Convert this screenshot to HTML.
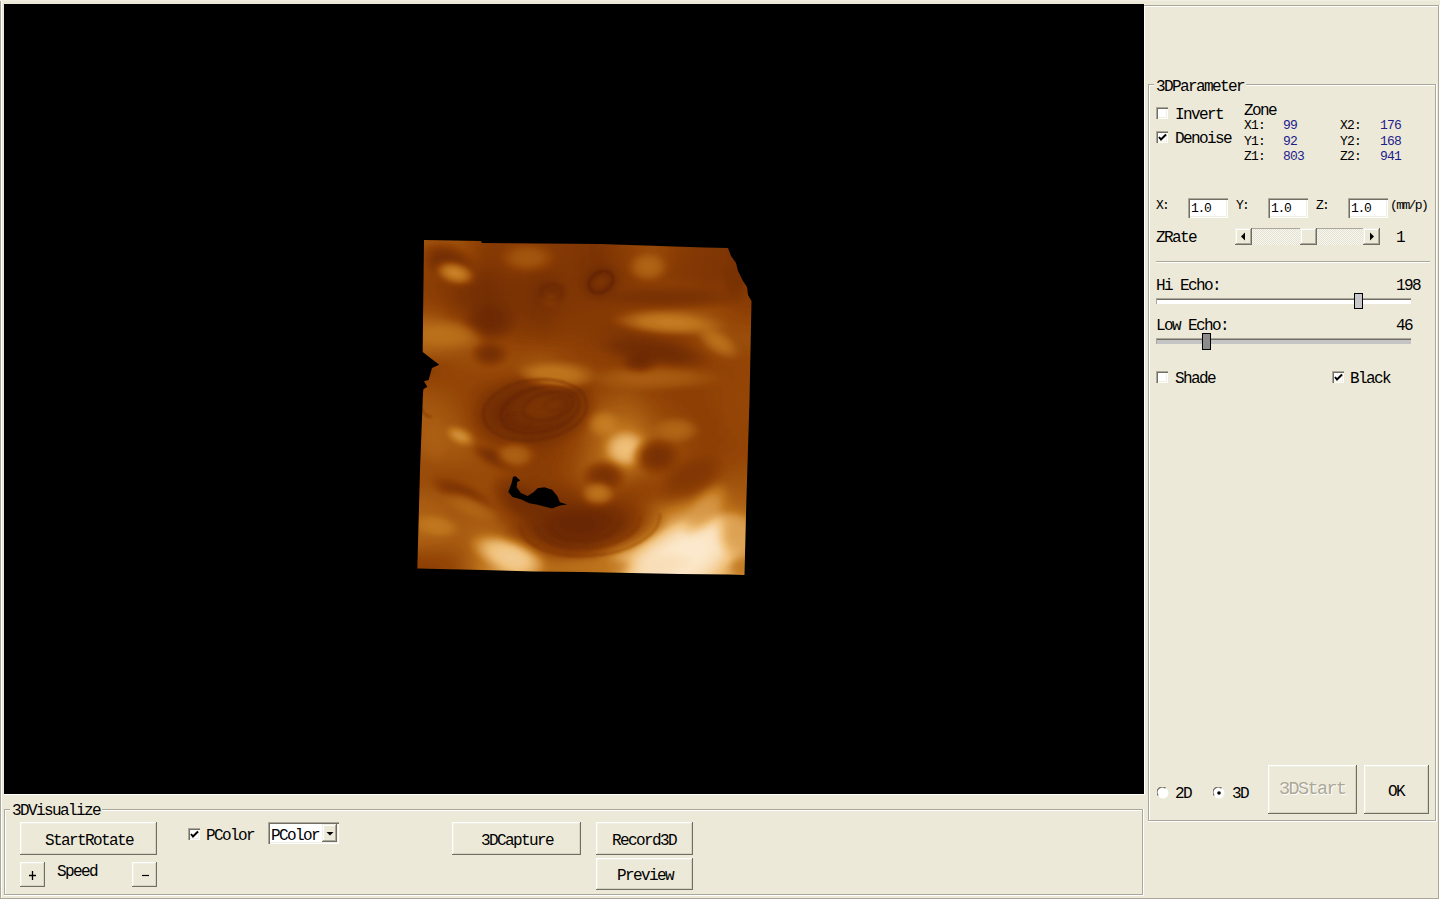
<!DOCTYPE html>
<html><head><meta charset="utf-8"><title>3D</title>
<style>
html,body{margin:0;padding:0;width:1440px;height:900px;overflow:hidden;background:#ECE9D8;}
.t{position:absolute;white-space:pre;font-family:"Liberation Mono", monospace;line-height:1;}
</style></head><body>
<div style="position:absolute;left:0;top:0;width:1440px;height:900px;background:#ECE9D8"></div>
<div style="position:absolute;left:0px;top:0px;width:1px;height:900px;background:#ACA899"></div>
<div style="position:absolute;left:1px;top:0px;width:1px;height:900px;background:#FFFFFF"></div>
<div style="position:absolute;left:0px;top:898px;width:1440px;height:1px;background:#ACA899"></div>
<div style="position:absolute;left:0px;top:899px;width:1440px;height:1px;background:#FFFFFF"></div>
<div style="position:absolute;left:0px;top:0px;width:1440px;height:1px;background:#F1EFE2"></div>
<div style="position:absolute;left:4px;top:4px;width:1140px;height:790px;background:#000"></div>
<div style="position:absolute;left:1144px;top:4px;width:1px;height:791px;background:#FFFFFF"></div>
<div style="position:absolute;left:4px;top:794px;width:1141px;height:1px;background:#FFFFFF"></div>
<div style="position:absolute;left:1144px;top:5px;width:1295px;height:1px;background:#ACA899"></div>
<div style="position:absolute;left:1145px;top:6px;width:1293px;height:1px;background:#FFFFFF"></div>
<div style="position:absolute;left:1438px;top:5px;width:1px;height:894px;background:#ACA899"></div>
<div style="position:absolute;left:1439px;top:5px;width:1px;height:895px;background:#FFFFFF"></div>
<svg style="position:absolute;left:400px;top:220px" width="370" height="380" viewBox="400 220 370 380">
<defs>
<clipPath id="clipimg"><polygon points="424,240 481,241 482,243 600,244 704,247.5 728,248 731,256 736,263 738,271 743,281 747,287 748,295 751.5,301 749.5,400 746.4,500 744.5,575 728.7,574.5 680,574 631,573 582.7,572 534,571.5 483,570 417.3,568.5 420,470 422.7,400 423.3,389.3 427.3,386.7 424,381.3 428.7,380 430,374.7 432,368 439.3,364.7 432,359.3 422.7,352 423,320 424,240"/></clipPath>
<filter id="gb" x="-20%" y="-20%" width="140%" height="140%"><feGaussianBlur stdDeviation="12"/></filter>
<filter id="rb" x="-10%" y="-10%" width="120%" height="120%"><feGaussianBlur stdDeviation="0.9"/></filter>
<filter id="sm" x="-10%" y="-10%" width="120%" height="120%"><feGaussianBlur stdDeviation="2.5"/></filter>
<filter id="pal" x="0" y="0" width="100%" height="100%" color-interpolation-filters="sRGB"><feComponentTransfer><feFuncR type="table" tableValues="0 0.38 0.57 0.76 0.94 1"/><feFuncG type="table" tableValues="0 0.13 0.26 0.47 0.75 0.95"/><feFuncB type="table" tableValues="0 0.01 0.02 0.12 0.47 0.88"/></feComponentTransfer></filter>
<radialGradient id="r0"><stop offset="0" stop-color="rgb(61,61,61)" stop-opacity="1"/><stop offset="0.45" stop-color="rgb(61,61,61)" stop-opacity="0.850"/><stop offset="1" stop-color="rgb(61,61,61)" stop-opacity="0"/></radialGradient>
<radialGradient id="r1"><stop offset="0" stop-color="rgb(178,178,178)" stop-opacity="1"/><stop offset="0.45" stop-color="rgb(178,178,178)" stop-opacity="0.850"/><stop offset="1" stop-color="rgb(178,178,178)" stop-opacity="0"/></radialGradient>
<radialGradient id="r2"><stop offset="0" stop-color="rgb(128,128,128)" stop-opacity="1"/><stop offset="0.45" stop-color="rgb(128,128,128)" stop-opacity="0.850"/><stop offset="1" stop-color="rgb(128,128,128)" stop-opacity="0"/></radialGradient>
<radialGradient id="r3"><stop offset="0" stop-color="rgb(61,61,61)" stop-opacity="1"/><stop offset="0.45" stop-color="rgb(61,61,61)" stop-opacity="0.850"/><stop offset="1" stop-color="rgb(61,61,61)" stop-opacity="0"/></radialGradient>
<radialGradient id="r4"><stop offset="0" stop-color="rgb(66,66,66)" stop-opacity="1"/><stop offset="0.45" stop-color="rgb(66,66,66)" stop-opacity="0.850"/><stop offset="1" stop-color="rgb(66,66,66)" stop-opacity="0"/></radialGradient>
<radialGradient id="r5"><stop offset="0" stop-color="rgb(92,92,92)" stop-opacity="1"/><stop offset="0.45" stop-color="rgb(92,92,92)" stop-opacity="0.850"/><stop offset="1" stop-color="rgb(92,92,92)" stop-opacity="0"/></radialGradient>
<radialGradient id="r6"><stop offset="0" stop-color="rgb(148,148,148)" stop-opacity="1"/><stop offset="0.45" stop-color="rgb(148,148,148)" stop-opacity="0.850"/><stop offset="1" stop-color="rgb(148,148,148)" stop-opacity="0"/></radialGradient>
<radialGradient id="r7"><stop offset="0" stop-color="rgb(66,66,66)" stop-opacity="1"/><stop offset="0.45" stop-color="rgb(66,66,66)" stop-opacity="0.850"/><stop offset="1" stop-color="rgb(66,66,66)" stop-opacity="0"/></radialGradient>
<radialGradient id="r8"><stop offset="0" stop-color="rgb(153,153,153)" stop-opacity="1"/><stop offset="0.45" stop-color="rgb(153,153,153)" stop-opacity="0.850"/><stop offset="1" stop-color="rgb(153,153,153)" stop-opacity="0"/></radialGradient>
<radialGradient id="r9"><stop offset="0" stop-color="rgb(61,61,61)" stop-opacity="1"/><stop offset="0.45" stop-color="rgb(61,61,61)" stop-opacity="0.850"/><stop offset="1" stop-color="rgb(61,61,61)" stop-opacity="0"/></radialGradient>
<radialGradient id="r10"><stop offset="0" stop-color="rgb(87,87,87)" stop-opacity="1"/><stop offset="0.45" stop-color="rgb(87,87,87)" stop-opacity="0.850"/><stop offset="1" stop-color="rgb(87,87,87)" stop-opacity="0"/></radialGradient>
<radialGradient id="r11"><stop offset="0" stop-color="rgb(143,143,143)" stop-opacity="1"/><stop offset="0.45" stop-color="rgb(143,143,143)" stop-opacity="0.850"/><stop offset="1" stop-color="rgb(143,143,143)" stop-opacity="0"/></radialGradient>
<radialGradient id="r12"><stop offset="0" stop-color="rgb(71,71,71)" stop-opacity="1"/><stop offset="0.45" stop-color="rgb(71,71,71)" stop-opacity="0.850"/><stop offset="1" stop-color="rgb(71,71,71)" stop-opacity="0"/></radialGradient>
<radialGradient id="r13"><stop offset="0" stop-color="rgb(168,168,168)" stop-opacity="1"/><stop offset="0.45" stop-color="rgb(168,168,168)" stop-opacity="0.850"/><stop offset="1" stop-color="rgb(168,168,168)" stop-opacity="0"/></radialGradient>
<radialGradient id="r14"><stop offset="0" stop-color="rgb(153,153,153)" stop-opacity="1"/><stop offset="0.45" stop-color="rgb(153,153,153)" stop-opacity="0.850"/><stop offset="1" stop-color="rgb(153,153,153)" stop-opacity="0"/></radialGradient>
<radialGradient id="r15"><stop offset="0" stop-color="rgb(64,64,64)" stop-opacity="1"/><stop offset="0.45" stop-color="rgb(64,64,64)" stop-opacity="0.850"/><stop offset="1" stop-color="rgb(64,64,64)" stop-opacity="0"/></radialGradient>
<radialGradient id="r16"><stop offset="0" stop-color="rgb(133,133,133)" stop-opacity="1"/><stop offset="0.45" stop-color="rgb(133,133,133)" stop-opacity="0.850"/><stop offset="1" stop-color="rgb(133,133,133)" stop-opacity="0"/></radialGradient>
<radialGradient id="r17"><stop offset="0" stop-color="rgb(61,61,61)" stop-opacity="1"/><stop offset="0.45" stop-color="rgb(61,61,61)" stop-opacity="0.850"/><stop offset="1" stop-color="rgb(61,61,61)" stop-opacity="0"/></radialGradient>
<radialGradient id="r18"><stop offset="0" stop-color="rgb(76,76,76)" stop-opacity="1"/><stop offset="0.45" stop-color="rgb(76,76,76)" stop-opacity="0.850"/><stop offset="1" stop-color="rgb(76,76,76)" stop-opacity="0"/></radialGradient>
<radialGradient id="r19"><stop offset="0" stop-color="rgb(61,61,61)" stop-opacity="1"/><stop offset="0.45" stop-color="rgb(61,61,61)" stop-opacity="0.850"/><stop offset="1" stop-color="rgb(61,61,61)" stop-opacity="0"/></radialGradient>
<radialGradient id="r20"><stop offset="0" stop-color="rgb(82,82,82)" stop-opacity="1"/><stop offset="0.45" stop-color="rgb(82,82,82)" stop-opacity="0.850"/><stop offset="1" stop-color="rgb(82,82,82)" stop-opacity="0"/></radialGradient>
<radialGradient id="r21"><stop offset="0" stop-color="rgb(158,158,158)" stop-opacity="1"/><stop offset="0.45" stop-color="rgb(158,158,158)" stop-opacity="0.850"/><stop offset="1" stop-color="rgb(158,158,158)" stop-opacity="0"/></radialGradient>
<radialGradient id="r22"><stop offset="0" stop-color="rgb(163,163,163)" stop-opacity="1"/><stop offset="0.45" stop-color="rgb(163,163,163)" stop-opacity="0.850"/><stop offset="1" stop-color="rgb(163,163,163)" stop-opacity="0"/></radialGradient>
<radialGradient id="r23"><stop offset="0" stop-color="rgb(214,214,214)" stop-opacity="1"/><stop offset="0.45" stop-color="rgb(214,214,214)" stop-opacity="0.850"/><stop offset="1" stop-color="rgb(214,214,214)" stop-opacity="0"/></radialGradient>
<radialGradient id="r24"><stop offset="0" stop-color="rgb(184,184,184)" stop-opacity="1"/><stop offset="0.45" stop-color="rgb(184,184,184)" stop-opacity="0.850"/><stop offset="1" stop-color="rgb(184,184,184)" stop-opacity="0"/></radialGradient>
<radialGradient id="r25"><stop offset="0" stop-color="rgb(66,66,66)" stop-opacity="1"/><stop offset="0.45" stop-color="rgb(66,66,66)" stop-opacity="0.850"/><stop offset="1" stop-color="rgb(66,66,66)" stop-opacity="0"/></radialGradient>
<radialGradient id="r26"><stop offset="0" stop-color="rgb(133,133,133)" stop-opacity="0.8"/><stop offset="0.45" stop-color="rgb(133,133,133)" stop-opacity="0.680"/><stop offset="1" stop-color="rgb(133,133,133)" stop-opacity="0"/></radialGradient>
<radialGradient id="r27"><stop offset="0" stop-color="rgb(140,140,140)" stop-opacity="1"/><stop offset="0.45" stop-color="rgb(140,140,140)" stop-opacity="0.850"/><stop offset="1" stop-color="rgb(140,140,140)" stop-opacity="0"/></radialGradient>
<radialGradient id="r28"><stop offset="0" stop-color="rgb(143,143,143)" stop-opacity="1"/><stop offset="0.45" stop-color="rgb(143,143,143)" stop-opacity="0.850"/><stop offset="1" stop-color="rgb(143,143,143)" stop-opacity="0"/></radialGradient>
<radialGradient id="r29"><stop offset="0" stop-color="rgb(66,66,66)" stop-opacity="1"/><stop offset="0.45" stop-color="rgb(66,66,66)" stop-opacity="0.850"/><stop offset="1" stop-color="rgb(66,66,66)" stop-opacity="0"/></radialGradient>
<radialGradient id="r30"><stop offset="0" stop-color="rgb(66,66,66)" stop-opacity="1"/><stop offset="0.45" stop-color="rgb(66,66,66)" stop-opacity="0.850"/><stop offset="1" stop-color="rgb(66,66,66)" stop-opacity="0"/></radialGradient>
<radialGradient id="r31"><stop offset="0" stop-color="rgb(158,158,158)" stop-opacity="1"/><stop offset="0.45" stop-color="rgb(158,158,158)" stop-opacity="0.850"/><stop offset="1" stop-color="rgb(158,158,158)" stop-opacity="0"/></radialGradient>
<radialGradient id="r32"><stop offset="0" stop-color="rgb(71,71,71)" stop-opacity="1"/><stop offset="0.45" stop-color="rgb(71,71,71)" stop-opacity="0.850"/><stop offset="1" stop-color="rgb(71,71,71)" stop-opacity="0"/></radialGradient>
<radialGradient id="r33"><stop offset="0" stop-color="rgb(140,140,140)" stop-opacity="1"/><stop offset="0.45" stop-color="rgb(140,140,140)" stop-opacity="0.850"/><stop offset="1" stop-color="rgb(140,140,140)" stop-opacity="0"/></radialGradient>
<radialGradient id="r34"><stop offset="0" stop-color="rgb(158,158,158)" stop-opacity="1"/><stop offset="0.45" stop-color="rgb(158,158,158)" stop-opacity="0.850"/><stop offset="1" stop-color="rgb(158,158,158)" stop-opacity="0"/></radialGradient>
<radialGradient id="r35"><stop offset="0" stop-color="rgb(56,56,56)" stop-opacity="0.9"/><stop offset="0.45" stop-color="rgb(56,56,56)" stop-opacity="0.765"/><stop offset="1" stop-color="rgb(56,56,56)" stop-opacity="0"/></radialGradient>
<radialGradient id="r36"><stop offset="0" stop-color="rgb(64,64,64)" stop-opacity="0.8"/><stop offset="0.45" stop-color="rgb(64,64,64)" stop-opacity="0.680"/><stop offset="1" stop-color="rgb(64,64,64)" stop-opacity="0"/></radialGradient>
<radialGradient id="r37"><stop offset="0" stop-color="rgb(71,71,71)" stop-opacity="0.7"/><stop offset="0.45" stop-color="rgb(71,71,71)" stop-opacity="0.595"/><stop offset="1" stop-color="rgb(71,71,71)" stop-opacity="0"/></radialGradient>
<radialGradient id="r38"><stop offset="0" stop-color="rgb(148,148,148)" stop-opacity="1"/><stop offset="0.45" stop-color="rgb(148,148,148)" stop-opacity="0.850"/><stop offset="1" stop-color="rgb(148,148,148)" stop-opacity="0"/></radialGradient>
<radialGradient id="r39"><stop offset="0" stop-color="rgb(224,224,224)" stop-opacity="1"/><stop offset="0.45" stop-color="rgb(224,224,224)" stop-opacity="0.850"/><stop offset="1" stop-color="rgb(224,224,224)" stop-opacity="0"/></radialGradient>
<radialGradient id="r40"><stop offset="0" stop-color="rgb(250,250,250)" stop-opacity="1"/><stop offset="0.45" stop-color="rgb(250,250,250)" stop-opacity="0.850"/><stop offset="1" stop-color="rgb(250,250,250)" stop-opacity="0"/></radialGradient>
<radialGradient id="r41"><stop offset="0" stop-color="rgb(235,235,235)" stop-opacity="1"/><stop offset="0.45" stop-color="rgb(235,235,235)" stop-opacity="0.850"/><stop offset="1" stop-color="rgb(235,235,235)" stop-opacity="0"/></radialGradient>
<radialGradient id="r42"><stop offset="0" stop-color="rgb(178,178,178)" stop-opacity="1"/><stop offset="0.45" stop-color="rgb(178,178,178)" stop-opacity="0.850"/><stop offset="1" stop-color="rgb(178,178,178)" stop-opacity="0"/></radialGradient>
<radialGradient id="r43"><stop offset="0" stop-color="rgb(184,184,184)" stop-opacity="1"/><stop offset="0.45" stop-color="rgb(184,184,184)" stop-opacity="0.850"/><stop offset="1" stop-color="rgb(184,184,184)" stop-opacity="0"/></radialGradient>
<radialGradient id="r44"><stop offset="0" stop-color="rgb(153,153,153)" stop-opacity="1"/><stop offset="0.45" stop-color="rgb(153,153,153)" stop-opacity="0.850"/><stop offset="1" stop-color="rgb(153,153,153)" stop-opacity="0"/></radialGradient>
</defs>
<g clip-path="url(#clipimg)"><g filter="url(#pal)"><g filter="url(#sm)">
<g filter="url(#gb)">
<rect x="362.6" y="184.2" width="28.3" height="28.5" fill="rgb(117,117,117)"/>
<rect x="390.3" y="184.2" width="28.3" height="28.5" fill="rgb(117,117,117)"/>
<rect x="418.0" y="184.2" width="28.3" height="28.5" fill="rgb(117,117,117)"/>
<rect x="445.7" y="184.2" width="28.3" height="28.5" fill="rgb(117,117,117)"/>
<rect x="473.4" y="184.2" width="28.3" height="28.5" fill="rgb(87,87,87)"/>
<rect x="501.1" y="184.2" width="28.3" height="28.5" fill="rgb(97,97,97)"/>
<rect x="528.8" y="184.2" width="28.3" height="28.5" fill="rgb(92,92,92)"/>
<rect x="556.5" y="184.2" width="28.3" height="28.5" fill="rgb(87,87,87)"/>
<rect x="584.2" y="184.2" width="28.3" height="28.5" fill="rgb(79,79,79)"/>
<rect x="611.9" y="184.2" width="28.3" height="28.5" fill="rgb(97,97,97)"/>
<rect x="639.6" y="184.2" width="28.3" height="28.5" fill="rgb(112,112,112)"/>
<rect x="667.3" y="184.2" width="28.3" height="28.5" fill="rgb(92,92,92)"/>
<rect x="695.0" y="184.2" width="28.3" height="28.5" fill="rgb(87,87,87)"/>
<rect x="722.7" y="184.2" width="28.3" height="28.5" fill="rgb(79,79,79)"/>
<rect x="750.4" y="184.2" width="28.3" height="28.5" fill="rgb(79,79,79)"/>
<rect x="778.1" y="184.2" width="28.3" height="28.5" fill="rgb(79,79,79)"/>
<rect x="362.6" y="212.1" width="28.3" height="28.5" fill="rgb(117,117,117)"/>
<rect x="390.3" y="212.1" width="28.3" height="28.5" fill="rgb(117,117,117)"/>
<rect x="418.0" y="212.1" width="28.3" height="28.5" fill="rgb(117,117,117)"/>
<rect x="445.7" y="212.1" width="28.3" height="28.5" fill="rgb(117,117,117)"/>
<rect x="473.4" y="212.1" width="28.3" height="28.5" fill="rgb(87,87,87)"/>
<rect x="501.1" y="212.1" width="28.3" height="28.5" fill="rgb(97,97,97)"/>
<rect x="528.8" y="212.1" width="28.3" height="28.5" fill="rgb(92,92,92)"/>
<rect x="556.5" y="212.1" width="28.3" height="28.5" fill="rgb(87,87,87)"/>
<rect x="584.2" y="212.1" width="28.3" height="28.5" fill="rgb(79,79,79)"/>
<rect x="611.9" y="212.1" width="28.3" height="28.5" fill="rgb(97,97,97)"/>
<rect x="639.6" y="212.1" width="28.3" height="28.5" fill="rgb(112,112,112)"/>
<rect x="667.3" y="212.1" width="28.3" height="28.5" fill="rgb(92,92,92)"/>
<rect x="695.0" y="212.1" width="28.3" height="28.5" fill="rgb(87,87,87)"/>
<rect x="722.7" y="212.1" width="28.3" height="28.5" fill="rgb(79,79,79)"/>
<rect x="750.4" y="212.1" width="28.3" height="28.5" fill="rgb(79,79,79)"/>
<rect x="778.1" y="212.1" width="28.3" height="28.5" fill="rgb(79,79,79)"/>
<rect x="362.6" y="240.0" width="28.3" height="28.5" fill="rgb(117,117,117)"/>
<rect x="390.3" y="240.0" width="28.3" height="28.5" fill="rgb(117,117,117)"/>
<rect x="418.0" y="240.0" width="28.3" height="28.5" fill="rgb(117,117,117)"/>
<rect x="445.7" y="240.0" width="28.3" height="28.5" fill="rgb(117,117,117)"/>
<rect x="473.4" y="240.0" width="28.3" height="28.5" fill="rgb(87,87,87)"/>
<rect x="501.1" y="240.0" width="28.3" height="28.5" fill="rgb(97,97,97)"/>
<rect x="528.8" y="240.0" width="28.3" height="28.5" fill="rgb(92,92,92)"/>
<rect x="556.5" y="240.0" width="28.3" height="28.5" fill="rgb(87,87,87)"/>
<rect x="584.2" y="240.0" width="28.3" height="28.5" fill="rgb(79,79,79)"/>
<rect x="611.9" y="240.0" width="28.3" height="28.5" fill="rgb(97,97,97)"/>
<rect x="639.6" y="240.0" width="28.3" height="28.5" fill="rgb(112,112,112)"/>
<rect x="667.3" y="240.0" width="28.3" height="28.5" fill="rgb(92,92,92)"/>
<rect x="695.0" y="240.0" width="28.3" height="28.5" fill="rgb(87,87,87)"/>
<rect x="722.7" y="240.0" width="28.3" height="28.5" fill="rgb(79,79,79)"/>
<rect x="750.4" y="240.0" width="28.3" height="28.5" fill="rgb(79,79,79)"/>
<rect x="778.1" y="240.0" width="28.3" height="28.5" fill="rgb(79,79,79)"/>
<rect x="362.6" y="267.9" width="28.3" height="28.5" fill="rgb(92,92,92)"/>
<rect x="390.3" y="267.9" width="28.3" height="28.5" fill="rgb(92,92,92)"/>
<rect x="418.0" y="267.9" width="28.3" height="28.5" fill="rgb(92,92,92)"/>
<rect x="445.7" y="267.9" width="28.3" height="28.5" fill="rgb(79,79,79)"/>
<rect x="473.4" y="267.9" width="28.3" height="28.5" fill="rgb(71,71,71)"/>
<rect x="501.1" y="267.9" width="28.3" height="28.5" fill="rgb(82,82,82)"/>
<rect x="528.8" y="267.9" width="28.3" height="28.5" fill="rgb(71,71,71)"/>
<rect x="556.5" y="267.9" width="28.3" height="28.5" fill="rgb(87,87,87)"/>
<rect x="584.2" y="267.9" width="28.3" height="28.5" fill="rgb(66,66,66)"/>
<rect x="611.9" y="267.9" width="28.3" height="28.5" fill="rgb(87,87,87)"/>
<rect x="639.6" y="267.9" width="28.3" height="28.5" fill="rgb(92,92,92)"/>
<rect x="667.3" y="267.9" width="28.3" height="28.5" fill="rgb(87,87,87)"/>
<rect x="695.0" y="267.9" width="28.3" height="28.5" fill="rgb(79,79,79)"/>
<rect x="722.7" y="267.9" width="28.3" height="28.5" fill="rgb(87,87,87)"/>
<rect x="750.4" y="267.9" width="28.3" height="28.5" fill="rgb(87,87,87)"/>
<rect x="778.1" y="267.9" width="28.3" height="28.5" fill="rgb(87,87,87)"/>
<rect x="362.6" y="295.8" width="28.3" height="28.5" fill="rgb(105,105,105)"/>
<rect x="390.3" y="295.8" width="28.3" height="28.5" fill="rgb(105,105,105)"/>
<rect x="418.0" y="295.8" width="28.3" height="28.5" fill="rgb(105,105,105)"/>
<rect x="445.7" y="295.8" width="28.3" height="28.5" fill="rgb(79,79,79)"/>
<rect x="473.4" y="295.8" width="28.3" height="28.5" fill="rgb(66,66,66)"/>
<rect x="501.1" y="295.8" width="28.3" height="28.5" fill="rgb(79,79,79)"/>
<rect x="528.8" y="295.8" width="28.3" height="28.5" fill="rgb(74,74,74)"/>
<rect x="556.5" y="295.8" width="28.3" height="28.5" fill="rgb(87,87,87)"/>
<rect x="584.2" y="295.8" width="28.3" height="28.5" fill="rgb(92,92,92)"/>
<rect x="611.9" y="295.8" width="28.3" height="28.5" fill="rgb(97,97,97)"/>
<rect x="639.6" y="295.8" width="28.3" height="28.5" fill="rgb(117,117,117)"/>
<rect x="667.3" y="295.8" width="28.3" height="28.5" fill="rgb(130,130,130)"/>
<rect x="695.0" y="295.8" width="28.3" height="28.5" fill="rgb(117,117,117)"/>
<rect x="722.7" y="295.8" width="28.3" height="28.5" fill="rgb(97,97,97)"/>
<rect x="750.4" y="295.8" width="28.3" height="28.5" fill="rgb(97,97,97)"/>
<rect x="778.1" y="295.8" width="28.3" height="28.5" fill="rgb(97,97,97)"/>
<rect x="362.6" y="323.7" width="28.3" height="28.5" fill="rgb(153,153,153)"/>
<rect x="390.3" y="323.7" width="28.3" height="28.5" fill="rgb(153,153,153)"/>
<rect x="418.0" y="323.7" width="28.3" height="28.5" fill="rgb(153,153,153)"/>
<rect x="445.7" y="323.7" width="28.3" height="28.5" fill="rgb(128,128,128)"/>
<rect x="473.4" y="323.7" width="28.3" height="28.5" fill="rgb(107,107,107)"/>
<rect x="501.1" y="323.7" width="28.3" height="28.5" fill="rgb(97,97,97)"/>
<rect x="528.8" y="323.7" width="28.3" height="28.5" fill="rgb(89,89,89)"/>
<rect x="556.5" y="323.7" width="28.3" height="28.5" fill="rgb(97,97,97)"/>
<rect x="584.2" y="323.7" width="28.3" height="28.5" fill="rgb(89,89,89)"/>
<rect x="611.9" y="323.7" width="28.3" height="28.5" fill="rgb(76,76,76)"/>
<rect x="639.6" y="323.7" width="28.3" height="28.5" fill="rgb(76,76,76)"/>
<rect x="667.3" y="323.7" width="28.3" height="28.5" fill="rgb(82,82,82)"/>
<rect x="695.0" y="323.7" width="28.3" height="28.5" fill="rgb(115,115,115)"/>
<rect x="722.7" y="323.7" width="28.3" height="28.5" fill="rgb(115,115,115)"/>
<rect x="750.4" y="323.7" width="28.3" height="28.5" fill="rgb(115,115,115)"/>
<rect x="778.1" y="323.7" width="28.3" height="28.5" fill="rgb(115,115,115)"/>
<rect x="362.6" y="351.6" width="28.3" height="28.5" fill="rgb(89,89,89)"/>
<rect x="390.3" y="351.6" width="28.3" height="28.5" fill="rgb(89,89,89)"/>
<rect x="418.0" y="351.6" width="28.3" height="28.5" fill="rgb(89,89,89)"/>
<rect x="445.7" y="351.6" width="28.3" height="28.5" fill="rgb(107,107,107)"/>
<rect x="473.4" y="351.6" width="28.3" height="28.5" fill="rgb(115,115,115)"/>
<rect x="501.1" y="351.6" width="28.3" height="28.5" fill="rgb(115,115,115)"/>
<rect x="528.8" y="351.6" width="28.3" height="28.5" fill="rgb(128,128,128)"/>
<rect x="556.5" y="351.6" width="28.3" height="28.5" fill="rgb(107,107,107)"/>
<rect x="584.2" y="351.6" width="28.3" height="28.5" fill="rgb(102,102,102)"/>
<rect x="611.9" y="351.6" width="28.3" height="28.5" fill="rgb(97,97,97)"/>
<rect x="639.6" y="351.6" width="28.3" height="28.5" fill="rgb(97,97,97)"/>
<rect x="667.3" y="351.6" width="28.3" height="28.5" fill="rgb(89,89,89)"/>
<rect x="695.0" y="351.6" width="28.3" height="28.5" fill="rgb(97,97,97)"/>
<rect x="722.7" y="351.6" width="28.3" height="28.5" fill="rgb(102,102,102)"/>
<rect x="750.4" y="351.6" width="28.3" height="28.5" fill="rgb(102,102,102)"/>
<rect x="778.1" y="351.6" width="28.3" height="28.5" fill="rgb(102,102,102)"/>
<rect x="362.6" y="379.5" width="28.3" height="28.5" fill="rgb(115,115,115)"/>
<rect x="390.3" y="379.5" width="28.3" height="28.5" fill="rgb(115,115,115)"/>
<rect x="418.0" y="379.5" width="28.3" height="28.5" fill="rgb(115,115,115)"/>
<rect x="445.7" y="379.5" width="28.3" height="28.5" fill="rgb(107,107,107)"/>
<rect x="473.4" y="379.5" width="28.3" height="28.5" fill="rgb(89,89,89)"/>
<rect x="501.1" y="379.5" width="28.3" height="28.5" fill="rgb(76,76,76)"/>
<rect x="528.8" y="379.5" width="28.3" height="28.5" fill="rgb(76,76,76)"/>
<rect x="556.5" y="379.5" width="28.3" height="28.5" fill="rgb(76,76,76)"/>
<rect x="584.2" y="379.5" width="28.3" height="28.5" fill="rgb(107,107,107)"/>
<rect x="611.9" y="379.5" width="28.3" height="28.5" fill="rgb(115,115,115)"/>
<rect x="639.6" y="379.5" width="28.3" height="28.5" fill="rgb(102,102,102)"/>
<rect x="667.3" y="379.5" width="28.3" height="28.5" fill="rgb(97,97,97)"/>
<rect x="695.0" y="379.5" width="28.3" height="28.5" fill="rgb(102,102,102)"/>
<rect x="722.7" y="379.5" width="28.3" height="28.5" fill="rgb(107,107,107)"/>
<rect x="750.4" y="379.5" width="28.3" height="28.5" fill="rgb(107,107,107)"/>
<rect x="778.1" y="379.5" width="28.3" height="28.5" fill="rgb(107,107,107)"/>
<rect x="362.6" y="407.4" width="28.3" height="28.5" fill="rgb(128,128,128)"/>
<rect x="390.3" y="407.4" width="28.3" height="28.5" fill="rgb(128,128,128)"/>
<rect x="418.0" y="407.4" width="28.3" height="28.5" fill="rgb(128,128,128)"/>
<rect x="445.7" y="407.4" width="28.3" height="28.5" fill="rgb(115,115,115)"/>
<rect x="473.4" y="407.4" width="28.3" height="28.5" fill="rgb(76,76,76)"/>
<rect x="501.1" y="407.4" width="28.3" height="28.5" fill="rgb(71,71,71)"/>
<rect x="528.8" y="407.4" width="28.3" height="28.5" fill="rgb(76,76,76)"/>
<rect x="556.5" y="407.4" width="28.3" height="28.5" fill="rgb(89,89,89)"/>
<rect x="584.2" y="407.4" width="28.3" height="28.5" fill="rgb(128,128,128)"/>
<rect x="611.9" y="407.4" width="28.3" height="28.5" fill="rgb(140,140,140)"/>
<rect x="639.6" y="407.4" width="28.3" height="28.5" fill="rgb(115,115,115)"/>
<rect x="667.3" y="407.4" width="28.3" height="28.5" fill="rgb(102,102,102)"/>
<rect x="695.0" y="407.4" width="28.3" height="28.5" fill="rgb(97,97,97)"/>
<rect x="722.7" y="407.4" width="28.3" height="28.5" fill="rgb(107,107,107)"/>
<rect x="750.4" y="407.4" width="28.3" height="28.5" fill="rgb(107,107,107)"/>
<rect x="778.1" y="407.4" width="28.3" height="28.5" fill="rgb(107,107,107)"/>
<rect x="362.6" y="435.3" width="28.3" height="28.5" fill="rgb(122,122,122)"/>
<rect x="390.3" y="435.3" width="28.3" height="28.5" fill="rgb(122,122,122)"/>
<rect x="418.0" y="435.3" width="28.3" height="28.5" fill="rgb(122,122,122)"/>
<rect x="445.7" y="435.3" width="28.3" height="28.5" fill="rgb(128,128,128)"/>
<rect x="473.4" y="435.3" width="28.3" height="28.5" fill="rgb(107,107,107)"/>
<rect x="501.1" y="435.3" width="28.3" height="28.5" fill="rgb(97,97,97)"/>
<rect x="528.8" y="435.3" width="28.3" height="28.5" fill="rgb(89,89,89)"/>
<rect x="556.5" y="435.3" width="28.3" height="28.5" fill="rgb(102,102,102)"/>
<rect x="584.2" y="435.3" width="28.3" height="28.5" fill="rgb(128,128,128)"/>
<rect x="611.9" y="435.3" width="28.3" height="28.5" fill="rgb(191,191,191)"/>
<rect x="639.6" y="435.3" width="28.3" height="28.5" fill="rgb(128,128,128)"/>
<rect x="667.3" y="435.3" width="28.3" height="28.5" fill="rgb(107,107,107)"/>
<rect x="695.0" y="435.3" width="28.3" height="28.5" fill="rgb(97,97,97)"/>
<rect x="722.7" y="435.3" width="28.3" height="28.5" fill="rgb(102,102,102)"/>
<rect x="750.4" y="435.3" width="28.3" height="28.5" fill="rgb(102,102,102)"/>
<rect x="778.1" y="435.3" width="28.3" height="28.5" fill="rgb(102,102,102)"/>
<rect x="362.6" y="463.2" width="28.3" height="28.5" fill="rgb(107,107,107)"/>
<rect x="390.3" y="463.2" width="28.3" height="28.5" fill="rgb(107,107,107)"/>
<rect x="418.0" y="463.2" width="28.3" height="28.5" fill="rgb(107,107,107)"/>
<rect x="445.7" y="463.2" width="28.3" height="28.5" fill="rgb(102,102,102)"/>
<rect x="473.4" y="463.2" width="28.3" height="28.5" fill="rgb(115,115,115)"/>
<rect x="501.1" y="463.2" width="28.3" height="28.5" fill="rgb(97,97,97)"/>
<rect x="528.8" y="463.2" width="28.3" height="28.5" fill="rgb(97,97,97)"/>
<rect x="556.5" y="463.2" width="28.3" height="28.5" fill="rgb(107,107,107)"/>
<rect x="584.2" y="463.2" width="28.3" height="28.5" fill="rgb(140,140,140)"/>
<rect x="611.9" y="463.2" width="28.3" height="28.5" fill="rgb(115,115,115)"/>
<rect x="639.6" y="463.2" width="28.3" height="28.5" fill="rgb(107,107,107)"/>
<rect x="667.3" y="463.2" width="28.3" height="28.5" fill="rgb(97,97,97)"/>
<rect x="695.0" y="463.2" width="28.3" height="28.5" fill="rgb(102,102,102)"/>
<rect x="722.7" y="463.2" width="28.3" height="28.5" fill="rgb(115,115,115)"/>
<rect x="750.4" y="463.2" width="28.3" height="28.5" fill="rgb(115,115,115)"/>
<rect x="778.1" y="463.2" width="28.3" height="28.5" fill="rgb(115,115,115)"/>
<rect x="362.6" y="491.1" width="28.3" height="28.5" fill="rgb(128,128,128)"/>
<rect x="390.3" y="491.1" width="28.3" height="28.5" fill="rgb(128,128,128)"/>
<rect x="418.0" y="491.1" width="28.3" height="28.5" fill="rgb(128,128,128)"/>
<rect x="445.7" y="491.1" width="28.3" height="28.5" fill="rgb(115,115,115)"/>
<rect x="473.4" y="491.1" width="28.3" height="28.5" fill="rgb(107,107,107)"/>
<rect x="501.1" y="491.1" width="28.3" height="28.5" fill="rgb(82,82,82)"/>
<rect x="528.8" y="491.1" width="28.3" height="28.5" fill="rgb(71,71,71)"/>
<rect x="556.5" y="491.1" width="28.3" height="28.5" fill="rgb(71,71,71)"/>
<rect x="584.2" y="491.1" width="28.3" height="28.5" fill="rgb(76,76,76)"/>
<rect x="611.9" y="491.1" width="28.3" height="28.5" fill="rgb(82,82,82)"/>
<rect x="639.6" y="491.1" width="28.3" height="28.5" fill="rgb(102,102,102)"/>
<rect x="667.3" y="491.1" width="28.3" height="28.5" fill="rgb(140,140,140)"/>
<rect x="695.0" y="491.1" width="28.3" height="28.5" fill="rgb(158,158,158)"/>
<rect x="722.7" y="491.1" width="28.3" height="28.5" fill="rgb(128,128,128)"/>
<rect x="750.4" y="491.1" width="28.3" height="28.5" fill="rgb(128,128,128)"/>
<rect x="778.1" y="491.1" width="28.3" height="28.5" fill="rgb(128,128,128)"/>
<rect x="362.6" y="519.0" width="28.3" height="28.5" fill="rgb(140,140,140)"/>
<rect x="390.3" y="519.0" width="28.3" height="28.5" fill="rgb(140,140,140)"/>
<rect x="418.0" y="519.0" width="28.3" height="28.5" fill="rgb(140,140,140)"/>
<rect x="445.7" y="519.0" width="28.3" height="28.5" fill="rgb(128,128,128)"/>
<rect x="473.4" y="519.0" width="28.3" height="28.5" fill="rgb(140,140,140)"/>
<rect x="501.1" y="519.0" width="28.3" height="28.5" fill="rgb(102,102,102)"/>
<rect x="528.8" y="519.0" width="28.3" height="28.5" fill="rgb(82,82,82)"/>
<rect x="556.5" y="519.0" width="28.3" height="28.5" fill="rgb(71,71,71)"/>
<rect x="584.2" y="519.0" width="28.3" height="28.5" fill="rgb(76,76,76)"/>
<rect x="611.9" y="519.0" width="28.3" height="28.5" fill="rgb(115,115,115)"/>
<rect x="639.6" y="519.0" width="28.3" height="28.5" fill="rgb(178,178,178)"/>
<rect x="667.3" y="519.0" width="28.3" height="28.5" fill="rgb(217,217,217)"/>
<rect x="695.0" y="519.0" width="28.3" height="28.5" fill="rgb(224,224,224)"/>
<rect x="722.7" y="519.0" width="28.3" height="28.5" fill="rgb(166,166,166)"/>
<rect x="750.4" y="519.0" width="28.3" height="28.5" fill="rgb(166,166,166)"/>
<rect x="778.1" y="519.0" width="28.3" height="28.5" fill="rgb(166,166,166)"/>
<rect x="362.6" y="546.9" width="28.3" height="28.5" fill="rgb(97,97,97)"/>
<rect x="390.3" y="546.9" width="28.3" height="28.5" fill="rgb(97,97,97)"/>
<rect x="418.0" y="546.9" width="28.3" height="28.5" fill="rgb(97,97,97)"/>
<rect x="445.7" y="546.9" width="28.3" height="28.5" fill="rgb(107,107,107)"/>
<rect x="473.4" y="546.9" width="28.3" height="28.5" fill="rgb(158,158,158)"/>
<rect x="501.1" y="546.9" width="28.3" height="28.5" fill="rgb(204,204,204)"/>
<rect x="528.8" y="546.9" width="28.3" height="28.5" fill="rgb(140,140,140)"/>
<rect x="556.5" y="546.9" width="28.3" height="28.5" fill="rgb(122,122,122)"/>
<rect x="584.2" y="546.9" width="28.3" height="28.5" fill="rgb(140,140,140)"/>
<rect x="611.9" y="546.9" width="28.3" height="28.5" fill="rgb(204,204,204)"/>
<rect x="639.6" y="546.9" width="28.3" height="28.5" fill="rgb(242,242,242)"/>
<rect x="667.3" y="546.9" width="28.3" height="28.5" fill="rgb(242,242,242)"/>
<rect x="695.0" y="546.9" width="28.3" height="28.5" fill="rgb(224,224,224)"/>
<rect x="722.7" y="546.9" width="28.3" height="28.5" fill="rgb(166,166,166)"/>
<rect x="750.4" y="546.9" width="28.3" height="28.5" fill="rgb(166,166,166)"/>
<rect x="778.1" y="546.9" width="28.3" height="28.5" fill="rgb(166,166,166)"/>
<rect x="362.6" y="574.8" width="28.3" height="28.5" fill="rgb(97,97,97)"/>
<rect x="390.3" y="574.8" width="28.3" height="28.5" fill="rgb(97,97,97)"/>
<rect x="418.0" y="574.8" width="28.3" height="28.5" fill="rgb(97,97,97)"/>
<rect x="445.7" y="574.8" width="28.3" height="28.5" fill="rgb(107,107,107)"/>
<rect x="473.4" y="574.8" width="28.3" height="28.5" fill="rgb(158,158,158)"/>
<rect x="501.1" y="574.8" width="28.3" height="28.5" fill="rgb(204,204,204)"/>
<rect x="528.8" y="574.8" width="28.3" height="28.5" fill="rgb(140,140,140)"/>
<rect x="556.5" y="574.8" width="28.3" height="28.5" fill="rgb(122,122,122)"/>
<rect x="584.2" y="574.8" width="28.3" height="28.5" fill="rgb(140,140,140)"/>
<rect x="611.9" y="574.8" width="28.3" height="28.5" fill="rgb(204,204,204)"/>
<rect x="639.6" y="574.8" width="28.3" height="28.5" fill="rgb(242,242,242)"/>
<rect x="667.3" y="574.8" width="28.3" height="28.5" fill="rgb(242,242,242)"/>
<rect x="695.0" y="574.8" width="28.3" height="28.5" fill="rgb(224,224,224)"/>
<rect x="722.7" y="574.8" width="28.3" height="28.5" fill="rgb(166,166,166)"/>
<rect x="750.4" y="574.8" width="28.3" height="28.5" fill="rgb(166,166,166)"/>
<rect x="778.1" y="574.8" width="28.3" height="28.5" fill="rgb(166,166,166)"/>
<rect x="362.6" y="602.7" width="28.3" height="28.5" fill="rgb(97,97,97)"/>
<rect x="390.3" y="602.7" width="28.3" height="28.5" fill="rgb(97,97,97)"/>
<rect x="418.0" y="602.7" width="28.3" height="28.5" fill="rgb(97,97,97)"/>
<rect x="445.7" y="602.7" width="28.3" height="28.5" fill="rgb(107,107,107)"/>
<rect x="473.4" y="602.7" width="28.3" height="28.5" fill="rgb(158,158,158)"/>
<rect x="501.1" y="602.7" width="28.3" height="28.5" fill="rgb(204,204,204)"/>
<rect x="528.8" y="602.7" width="28.3" height="28.5" fill="rgb(140,140,140)"/>
<rect x="556.5" y="602.7" width="28.3" height="28.5" fill="rgb(122,122,122)"/>
<rect x="584.2" y="602.7" width="28.3" height="28.5" fill="rgb(140,140,140)"/>
<rect x="611.9" y="602.7" width="28.3" height="28.5" fill="rgb(204,204,204)"/>
<rect x="639.6" y="602.7" width="28.3" height="28.5" fill="rgb(242,242,242)"/>
<rect x="667.3" y="602.7" width="28.3" height="28.5" fill="rgb(242,242,242)"/>
<rect x="695.0" y="602.7" width="28.3" height="28.5" fill="rgb(224,224,224)"/>
<rect x="722.7" y="602.7" width="28.3" height="28.5" fill="rgb(166,166,166)"/>
<rect x="750.4" y="602.7" width="28.3" height="28.5" fill="rgb(166,166,166)"/>
<rect x="778.1" y="602.7" width="28.3" height="28.5" fill="rgb(166,166,166)"/>
</g>
<g opacity="0.85">
<ellipse cx="447" cy="262" rx="30" ry="20" transform="rotate(20 447 262)" fill="url(#r0)"/>
<ellipse cx="455" cy="273" rx="22" ry="12" transform="rotate(15 455 273)" fill="url(#r1)"/>
<ellipse cx="528" cy="258" rx="30" ry="16" transform="rotate(0 528 258)" fill="url(#r2)"/>
<ellipse cx="490" cy="322" rx="30" ry="22" transform="rotate(0 490 322)" fill="url(#r3)"/>
<ellipse cx="551" cy="292" rx="18" ry="14" transform="rotate(0 551 292)" fill="url(#r4)"/>
<ellipse cx="550" cy="300" rx="10" ry="8" transform="rotate(0 550 300)" fill="url(#r5)"/>
<ellipse cx="448" cy="335" rx="38" ry="16" transform="rotate(5 448 335)" fill="url(#r6)"/>
<ellipse cx="490" cy="354" rx="20" ry="14" transform="rotate(0 490 354)" fill="url(#r7)"/>
<ellipse cx="560" cy="374" rx="40" ry="14" transform="rotate(0 560 374)" fill="url(#r8)"/>
<ellipse cx="601" cy="282" rx="22" ry="18" transform="rotate(-30 601 282)" fill="url(#r9)"/>
<ellipse cx="601" cy="282" rx="10" ry="7" transform="rotate(-30 601 282)" fill="url(#r10)"/>
<ellipse cx="648" cy="267" rx="22" ry="16" transform="rotate(0 648 267)" fill="url(#r11)"/>
<ellipse cx="670" cy="298" rx="80" ry="14" transform="rotate(0 670 298)" fill="url(#r12)"/>
<ellipse cx="668" cy="323" rx="60" ry="13" transform="rotate(3 668 323)" fill="url(#r13)"/>
<ellipse cx="718" cy="342" rx="26" ry="12" transform="rotate(35 718 342)" fill="url(#r14)"/>
<ellipse cx="655" cy="352" rx="60" ry="14" transform="rotate(8 655 352)" fill="url(#r15)"/>
<ellipse cx="655" cy="378" rx="75" ry="14" transform="rotate(0 655 378)" fill="url(#r16)"/>
<ellipse cx="640" cy="362" rx="20" ry="12" transform="rotate(0 640 362)" fill="url(#r17)"/>
<ellipse cx="735" cy="280" rx="14" ry="25" transform="rotate(0 735 280)" fill="url(#r18)"/>
<ellipse cx="535" cy="411" rx="66" ry="40" transform="rotate(-8 535 411)" fill="url(#r19)"/>
<ellipse cx="540" cy="408" rx="36" ry="20" transform="rotate(-8 540 408)" fill="url(#r20)"/>
<ellipse cx="554" cy="376" rx="40" ry="13" transform="rotate(8 554 376)" fill="url(#r21)"/>
<ellipse cx="604" cy="424" rx="18" ry="15" transform="rotate(0 604 424)" fill="url(#r22)"/>
<ellipse cx="626" cy="449" rx="24" ry="20" transform="rotate(0 626 449)" fill="url(#r23)"/>
<ellipse cx="460" cy="436" rx="17" ry="9" transform="rotate(25 460 436)" fill="url(#r24)"/>
<ellipse cx="495" cy="458" rx="26" ry="9" transform="rotate(25 495 458)" fill="url(#r25)"/>
<ellipse cx="435" cy="440" rx="16" ry="24" transform="rotate(0 435 440)" fill="url(#r26)"/>
<ellipse cx="515" cy="455" rx="22" ry="14" transform="rotate(0 515 455)" fill="url(#r27)"/>
<ellipse cx="676" cy="430" rx="26" ry="14" transform="rotate(0 676 430)" fill="url(#r28)"/>
<ellipse cx="656" cy="456" rx="26" ry="20" transform="rotate(0 656 456)" fill="url(#r29)"/>
<ellipse cx="604" cy="476" rx="24" ry="18" transform="rotate(0 604 476)" fill="url(#r30)"/>
<ellipse cx="598" cy="494" rx="18" ry="14" transform="rotate(0 598 494)" fill="url(#r31)"/>
<ellipse cx="462" cy="494" rx="36" ry="12" transform="rotate(25 462 494)" fill="url(#r32)"/>
<ellipse cx="470" cy="507" rx="34" ry="12" transform="rotate(25 470 507)" fill="url(#r33)"/>
<ellipse cx="436" cy="526" rx="26" ry="12" transform="rotate(10 436 526)" fill="url(#r34)"/>
<ellipse cx="585" cy="530" rx="85" ry="30" transform="rotate(-5 585 530)" fill="url(#r35)"/>
<ellipse cx="520" cy="500" rx="35" ry="18" transform="rotate(35 520 500)" fill="url(#r36)"/>
<ellipse cx="690" cy="480" rx="40" ry="22" transform="rotate(-30 690 480)" fill="url(#r37)"/>
<ellipse cx="590" cy="568" rx="60" ry="12" transform="rotate(0 590 568)" fill="url(#r38)"/>
<ellipse cx="508" cy="555" rx="42" ry="18" transform="rotate(20 508 555)" fill="url(#r39)"/>
<ellipse cx="695" cy="548" rx="70" ry="32" transform="rotate(-18 695 548)" fill="url(#r40)"/>
<ellipse cx="660" cy="566" rx="40" ry="14" transform="rotate(-10 660 566)" fill="url(#r41)"/>
<ellipse cx="705" cy="510" rx="16" ry="34" transform="rotate(40 705 510)" fill="url(#r42)"/>
<ellipse cx="735" cy="535" rx="20" ry="26" transform="rotate(0 735 535)" fill="url(#r43)"/>
<ellipse cx="742" cy="568" rx="14" ry="12" transform="rotate(0 742 568)" fill="url(#r44)"/>
</g></g>
<g filter="url(#rb)">
<ellipse cx="535" cy="410" rx="52" ry="30" transform="rotate(-8 535 410)" fill="none" stroke="rgb(46,46,46)" stroke-width="1.6" opacity="0.45"/>
<ellipse cx="540" cy="410" rx="40" ry="22" transform="rotate(-12 540 410)" fill="none" stroke="rgb(46,46,46)" stroke-width="1.5" opacity="0.45"/>
<ellipse cx="548" cy="406" rx="26" ry="13" transform="rotate(-15 548 406)" fill="none" stroke="rgb(46,46,46)" stroke-width="1.4" opacity="0.45"/>
<ellipse cx="556" cy="404" rx="12" ry="6" transform="rotate(-15 556 404)" fill="none" stroke="rgb(51,51,51)" stroke-width="1.2" opacity="0.35"/>
<ellipse cx="518" cy="422" rx="14" ry="9" transform="rotate(0 518 422)" fill="none" stroke="rgb(51,51,51)" stroke-width="1.2" opacity="0.35"/>
<ellipse cx="601" cy="282" rx="13" ry="10" transform="rotate(-35 601 282)" fill="none" stroke="rgb(36,36,36)" stroke-width="1.6" opacity="0.6"/>
<ellipse cx="552" cy="292" rx="11" ry="8" transform="rotate(0 552 292)" fill="none" stroke="rgb(51,51,51)" stroke-width="1.3" opacity="0.4"/>
<ellipse cx="590" cy="520" rx="70" ry="36" transform="rotate(-5 590 520)" fill="none" stroke="rgb(51,51,51)" stroke-width="1.5" opacity="0.35" pathLength="100" stroke-dasharray="50 50" stroke-dashoffset="0"/>
<ellipse cx="588" cy="522" rx="52" ry="26" transform="rotate(-5 588 522)" fill="none" stroke="rgb(51,51,51)" stroke-width="1.4" opacity="0.3" pathLength="100" stroke-dasharray="50 50" stroke-dashoffset="0"/>
<ellipse cx="585" cy="525" rx="34" ry="16" transform="rotate(-5 585 525)" fill="none" stroke="rgb(51,51,51)" stroke-width="1.3" opacity="0.3" pathLength="100" stroke-dasharray="50 50" stroke-dashoffset="0"/>
<ellipse cx="432" cy="395" rx="14" ry="22" transform="rotate(0 432 395)" fill="none" stroke="rgb(46,46,46)" stroke-width="1.5" opacity="0.4" pathLength="100" stroke-dasharray="50 50" stroke-dashoffset="75"/>
</g></g></g>
<polygon points="513.0,476.8 515.6,476.3 520.3,480.4 517.2,482 516.7,487.2 520.8,492.9 527.6,496 533.9,491.9 537.5,488.2 544.3,487.2 552.1,489.8 557.3,496 559.9,502.3 567.2,504.4 559.9,505.4 552.1,508.5 544.3,506.5 536.5,504.4 529.2,503.3 520.8,499.2 512.5,497.1 508.3,491.9 511.5,483.5" fill="#000"/>
</svg>
<div style="position:absolute;left:1148px;top:84px;width:287px;height:1px;background:#ACA899"></div>
<div style="position:absolute;left:1149px;top:85px;width:286px;height:1px;background:#FFFFFF"></div>
<div style="position:absolute;left:1148px;top:84px;width:1px;height:736px;background:#ACA899"></div>
<div style="position:absolute;left:1149px;top:85px;width:1px;height:735px;background:#FFFFFF"></div>
<div style="position:absolute;left:1148px;top:820px;width:288px;height:1px;background:#ACA899"></div>
<div style="position:absolute;left:1148px;top:821px;width:289px;height:1px;background:#FFFFFF"></div>
<div style="position:absolute;left:1435px;top:84px;width:1px;height:737px;background:#ACA899"></div>
<div style="position:absolute;left:1436px;top:84px;width:1px;height:738px;background:#FFFFFF"></div>
<div style="position:absolute;left:1154px;top:80px;width:92px;height:8px;background:#ECE9D8"></div>
<div class="t" style="left:1156px;top:78.74px;font-size:16px;letter-spacing:-1.60px;color:#000;">3DParameter</div>
<div style="position:absolute;left:1156px;top:107px;width:12px;height:12px;background:#fff;box-shadow: inset 1px 1px 0 #ACA899, inset 2px 2px 0 #716F64, inset -1px -1px 0 #FFFFFF, inset -2px -2px 0 #F1EFE2;"></div>
<div class="t" style="left:1175px;top:106.74px;font-size:16px;letter-spacing:-1.60px;color:#000;">Invert</div>
<div style="position:absolute;left:1156px;top:131px;width:12px;height:12px;background:#fff;box-shadow: inset 1px 1px 0 #ACA899, inset 2px 2px 0 #716F64, inset -1px -1px 0 #FFFFFF, inset -2px -2px 0 #F1EFE2;"></div>
<svg style="position:absolute;left:1156px;top:131px" width="13" height="13"><path d="M3 6 L5 8.5 L10 3.5" stroke="#000" stroke-width="2" fill="none"/></svg>
<div class="t" style="left:1175px;top:130.74px;font-size:16px;letter-spacing:-1.60px;color:#000;">Denoise</div>
<div class="t" style="left:1244px;top:102.74px;font-size:16px;letter-spacing:-1.60px;color:#000;">Zone</div>
<div class="t" style="left:1244px;top:118.64px;font-size:13px;letter-spacing:-0.80px;color:#000;">X1:</div>
<div class="t" style="left:1283px;top:118.64px;font-size:13px;letter-spacing:-0.80px;color:#1C1C8C;">99</div>
<div class="t" style="left:1340px;top:118.64px;font-size:13px;letter-spacing:-0.80px;color:#000;">X2:</div>
<div class="t" style="left:1380px;top:118.64px;font-size:13px;letter-spacing:-0.80px;color:#1C1C8C;">176</div>
<div class="t" style="left:1244px;top:134.54px;font-size:13px;letter-spacing:-0.80px;color:#000;">Y1:</div>
<div class="t" style="left:1283px;top:134.54px;font-size:13px;letter-spacing:-0.80px;color:#1C1C8C;">92</div>
<div class="t" style="left:1340px;top:134.54px;font-size:13px;letter-spacing:-0.80px;color:#000;">Y2:</div>
<div class="t" style="left:1380px;top:134.54px;font-size:13px;letter-spacing:-0.80px;color:#1C1C8C;">168</div>
<div class="t" style="left:1244px;top:150.34px;font-size:13px;letter-spacing:-0.80px;color:#000;">Z1:</div>
<div class="t" style="left:1283px;top:150.34px;font-size:13px;letter-spacing:-0.80px;color:#1C1C8C;">803</div>
<div class="t" style="left:1340px;top:150.34px;font-size:13px;letter-spacing:-0.80px;color:#000;">Z2:</div>
<div class="t" style="left:1380px;top:150.34px;font-size:13px;letter-spacing:-0.80px;color:#1C1C8C;">941</div>
<div class="t" style="left:1156px;top:198.74px;font-size:13px;letter-spacing:-1.80px;color:#000;">X:</div>
<div style="position:absolute;left:1188px;top:198px;width:40px;height:20px;background:#fff;box-shadow: inset 1px 1px 0 #ACA899, inset 2px 2px 0 #716F64, inset -1px -1px 0 #FFFFFF, inset -2px -2px 0 #F1EFE2;"></div>
<div class="t" style="left:1191px;top:202.04px;font-size:13px;letter-spacing:-1.30px;color:#000;">1.0</div>
<div class="t" style="left:1236px;top:198.74px;font-size:13px;letter-spacing:-1.80px;color:#000;">Y:</div>
<div style="position:absolute;left:1268px;top:198px;width:40px;height:20px;background:#fff;box-shadow: inset 1px 1px 0 #ACA899, inset 2px 2px 0 #716F64, inset -1px -1px 0 #FFFFFF, inset -2px -2px 0 #F1EFE2;"></div>
<div class="t" style="left:1271px;top:202.04px;font-size:13px;letter-spacing:-1.30px;color:#000;">1.0</div>
<div class="t" style="left:1316px;top:198.74px;font-size:13px;letter-spacing:-1.80px;color:#000;">Z:</div>
<div style="position:absolute;left:1348px;top:198px;width:40px;height:20px;background:#fff;box-shadow: inset 1px 1px 0 #ACA899, inset 2px 2px 0 #716F64, inset -1px -1px 0 #FFFFFF, inset -2px -2px 0 #F1EFE2;"></div>
<div class="t" style="left:1351px;top:202.04px;font-size:13px;letter-spacing:-1.30px;color:#000;">1.0</div>
<div class="t" style="left:1390px;top:198.74px;font-size:13px;letter-spacing:-1.60px;color:#000;">(mm/p)</div>
<div class="t" style="left:1156px;top:230.34px;font-size:16px;letter-spacing:-1.60px;color:#000;">ZRate</div>
<div style="position:absolute;left:1235px;top:228px;width:145px;height:17px;background-color:#F4F2E8;background-image:repeating-conic-gradient(#E4E1D3 0 25%, #F8F7F0 0 50%);background-size:2px 2px;box-shadow: inset 1px 1px 0 #ACA899;"></div>
<div style="position:absolute;left:1235px;top:228px;width:17px;height:17px;background:#ECE9D8;box-shadow: inset -1px -1px 0 #716F64, inset 1px 1px 0 #F1EFE2, inset -2px -2px 0 #ACA899, inset 2px 2px 0 #FFFFFF;"></div>
<div style="position:absolute;left:1300px;top:228px;width:17px;height:17px;background:#ECE9D8;box-shadow: inset -1px -1px 0 #716F64, inset 1px 1px 0 #F1EFE2, inset -2px -2px 0 #ACA899, inset 2px 2px 0 #FFFFFF;"></div>
<div style="position:absolute;left:1363px;top:228px;width:17px;height:17px;background:#ECE9D8;box-shadow: inset -1px -1px 0 #716F64, inset 1px 1px 0 #F1EFE2, inset -2px -2px 0 #ACA899, inset 2px 2px 0 #FFFFFF;"></div>
<svg style="position:absolute;left:1235px;top:228px" width="17" height="17"><path d="M10 4.5 L6 8.5 L10 12.5Z" fill="#000"/></svg>
<svg style="position:absolute;left:1363px;top:228px" width="17" height="17"><path d="M7 4.5 L11 8.5 L7 12.5Z" fill="#000"/></svg>
<div class="t" style="left:1396px;top:230.34px;font-size:16px;letter-spacing:-1.60px;color:#000;">1</div>
<div style="position:absolute;left:1156px;top:261px;width:274px;height:1px;background:#ACA899"></div>
<div style="position:absolute;left:1156px;top:262px;width:274px;height:1px;background:#FFFFFF"></div>
<div class="t" style="left:1156px;top:278.24px;font-size:16px;letter-spacing:-1.60px;color:#000;">Hi Echo:</div>
<div class="t" style="left:1396px;top:278.24px;font-size:16px;letter-spacing:-1.60px;color:#000;">198</div>
<div style="position:absolute;left:1156px;top:298px;width:255px;height:6px;background:#fff;box-shadow: inset 1px 1px 0 #ACA899, inset 0 2px 0 #716F64;"></div>
<div style="position:absolute;left:1354px;top:293px;width:7px;height:14px;background:#C8C8CC;border:1px solid #000;"></div>
<div class="t" style="left:1156px;top:318.24px;font-size:16px;letter-spacing:-1.60px;color:#000;">Low Echo:</div>
<div class="t" style="left:1396px;top:318.24px;font-size:16px;letter-spacing:-1.60px;color:#000;">46</div>
<div style="position:absolute;left:1156px;top:338px;width:255px;height:6px;background:#C4C4C4;box-shadow: inset 1px 1px 0 #ACA899, inset 0 2px 0 #716F64;"></div>
<div style="position:absolute;left:1202px;top:333px;width:7px;height:15px;background:#8C8C8C;border:1px solid #000;"></div>
<div style="position:absolute;left:1156px;top:371px;width:12px;height:12px;background:#fff;box-shadow: inset 1px 1px 0 #ACA899, inset 2px 2px 0 #716F64, inset -1px -1px 0 #FFFFFF, inset -2px -2px 0 #F1EFE2;"></div>
<div class="t" style="left:1175px;top:370.74px;font-size:16px;letter-spacing:-1.60px;color:#000;">Shade</div>
<div style="position:absolute;left:1332px;top:371px;width:12px;height:12px;background:#fff;box-shadow: inset 1px 1px 0 #ACA899, inset 2px 2px 0 #716F64, inset -1px -1px 0 #FFFFFF, inset -2px -2px 0 #F1EFE2;"></div>
<svg style="position:absolute;left:1332px;top:371px" width="13" height="13"><path d="M3 6 L5 8.5 L10 3.5" stroke="#000" stroke-width="2" fill="none"/></svg>
<div class="t" style="left:1350px;top:370.74px;font-size:16px;letter-spacing:-1.60px;color:#000;">Black</div>
<svg style="position:absolute;left:1156.5px;top:787px" width="12" height="12"><circle cx="6" cy="6" r="5.5" fill="#fff"/><path d="M1.2 8.5 A5.2 5.2 0 0 1 8.5 1.2" stroke="#716F64" stroke-width="1.2" fill="none"/></svg>
<div class="t" style="left:1175px;top:786.24px;font-size:16px;letter-spacing:-1.60px;color:#000;">2D</div>
<svg style="position:absolute;left:1212.5px;top:787px" width="12" height="12"><circle cx="6" cy="6" r="5.5" fill="#fff"/><path d="M1.2 8.5 A5.2 5.2 0 0 1 8.5 1.2" stroke="#716F64" stroke-width="1.2" fill="none"/><circle cx="6" cy="6" r="1.8" fill="#000"/></svg>
<div class="t" style="left:1232px;top:786.24px;font-size:16px;letter-spacing:-1.60px;color:#000;">3D</div>
<div style="position:absolute;left:1268px;top:765px;width:89px;height:49px;background:#ECE9D8;box-shadow: inset -1px -1px 0 #716F64, inset 1px 1px 0 #FFFFFF, inset -2px -2px 0 #D6D2C2, inset 2px 2px 0 #F1EFE2;"></div>
<div class="t" style="left:1278px;top:783.74px;font-size:16px;letter-spacing:-1.60px;color:#000;"></div>
<div class="t" style="left:1280px;top:782.13px;font-size:18.5px;letter-spacing:-1.60px;color:#FFFFFF;">3DStart</div>
<div class="t" style="left:1279px;top:781.13px;font-size:18.5px;letter-spacing:-1.60px;color:#ACA899;">3DStart</div>
<div style="position:absolute;left:1364px;top:765px;width:65px;height:49px;background:#ECE9D8;box-shadow: inset -1px -1px 0 #716F64, inset 1px 1px 0 #FFFFFF, inset -2px -2px 0 #D6D2C2, inset 2px 2px 0 #F1EFE2;"></div>
<div class="t" style="left:1388px;top:783.74px;font-size:16px;letter-spacing:-1.60px;color:#000;">OK</div>
<div style="position:absolute;left:4px;top:809px;width:1138px;height:1px;background:#ACA899"></div>
<div style="position:absolute;left:5px;top:810px;width:1137px;height:1px;background:#FFFFFF"></div>
<div style="position:absolute;left:4px;top:809px;width:1px;height:85px;background:#ACA899"></div>
<div style="position:absolute;left:5px;top:810px;width:1px;height:84px;background:#FFFFFF"></div>
<div style="position:absolute;left:4px;top:894px;width:1139px;height:1px;background:#ACA899"></div>
<div style="position:absolute;left:4px;top:895px;width:1140px;height:1px;background:#FFFFFF"></div>
<div style="position:absolute;left:1142px;top:809px;width:1px;height:86px;background:#ACA899"></div>
<div style="position:absolute;left:1143px;top:809px;width:1px;height:87px;background:#FFFFFF"></div>
<div style="position:absolute;left:10px;top:805px;width:92px;height:8px;background:#ECE9D8"></div>
<div class="t" style="left:12px;top:803.44px;font-size:16px;letter-spacing:-1.60px;color:#000;">3DVisualize</div>
<div style="position:absolute;left:20px;top:822px;width:137px;height:33px;background:#ECE9D8;box-shadow: inset -1px -1px 0 #716F64, inset 1px 1px 0 #FFFFFF, inset -2px -2px 0 #D6D2C2, inset 2px 2px 0 #F1EFE2;"></div>
<div class="t" style="left:45px;top:832.74px;font-size:16px;letter-spacing:-1.60px;color:#000;">StartRotate</div>
<div style="position:absolute;left:20px;top:862px;width:25px;height:25px;background:#ECE9D8;box-shadow: inset -1px -1px 0 #716F64, inset 1px 1px 0 #FFFFFF, inset -2px -2px 0 #D6D2C2, inset 2px 2px 0 #F1EFE2;"></div>
<div class="t" style="left:29px;top:867.74px;font-size:16px;letter-spacing:-1.60px;color:#000;"></div>
<svg style="position:absolute;left:20px;top:862px" width="25" height="25"><path d="M9 13.5H16M12.5 9V18" stroke="#000" stroke-width="1.3" fill="none"/></svg>
<div class="t" style="left:57px;top:863.74px;font-size:16px;letter-spacing:-1.60px;color:#000;">Speed</div>
<div style="position:absolute;left:132px;top:862px;width:25px;height:25px;background:#ECE9D8;box-shadow: inset -1px -1px 0 #716F64, inset 1px 1px 0 #FFFFFF, inset -2px -2px 0 #D6D2C2, inset 2px 2px 0 #F1EFE2;"></div>
<div class="t" style="left:140px;top:867.74px;font-size:16px;letter-spacing:-1.60px;color:#000;"></div>
<svg style="position:absolute;left:132px;top:862px" width="25" height="25"><path d="M10 13.5H17" stroke="#000" stroke-width="1.2" fill="none"/></svg>
<div style="position:absolute;left:188px;top:828px;width:12px;height:12px;background:#fff;box-shadow: inset 1px 1px 0 #ACA899, inset 2px 2px 0 #716F64, inset -1px -1px 0 #FFFFFF, inset -2px -2px 0 #F1EFE2;"></div>
<svg style="position:absolute;left:188px;top:828px" width="13" height="13"><path d="M3 6 L5 8.5 L10 3.5" stroke="#000" stroke-width="2" fill="none"/></svg>
<div class="t" style="left:206px;top:827.74px;font-size:16px;letter-spacing:-1.60px;color:#000;">PColor</div>
<div style="position:absolute;left:268px;top:822px;width:71px;height:22px;background:#fff;box-shadow: inset 1px 1px 0 #ACA899, inset 2px 2px 0 #716F64, inset -1px -1px 0 #FFFFFF, inset -2px -2px 0 #F1EFE2;"></div>
<div class="t" style="left:271px;top:827.74px;font-size:16px;letter-spacing:-1.60px;color:#000;">PColor</div>
<div style="position:absolute;left:322px;top:824px;width:15px;height:18px;background:#ECE9D8;box-shadow: inset -1px -1px 0 #716F64, inset 1px 1px 0 #F1EFE2, inset -2px -2px 0 #ACA899, inset 2px 2px 0 #FFFFFF;"></div>
<svg style="position:absolute;left:322px;top:824px" width="15" height="18"><path d="M4.5 8 L11.5 8 L8 11.5Z" fill="#000"/></svg>
<div style="position:absolute;left:452px;top:822px;width:129px;height:33px;background:#ECE9D8;box-shadow: inset -1px -1px 0 #716F64, inset 1px 1px 0 #FFFFFF, inset -2px -2px 0 #D6D2C2, inset 2px 2px 0 #F1EFE2;"></div>
<div class="t" style="left:481px;top:832.74px;font-size:16px;letter-spacing:-1.60px;color:#000;">3DCapture</div>
<div style="position:absolute;left:596px;top:822px;width:97px;height:33px;background:#ECE9D8;box-shadow: inset -1px -1px 0 #716F64, inset 1px 1px 0 #FFFFFF, inset -2px -2px 0 #D6D2C2, inset 2px 2px 0 #F1EFE2;"></div>
<div class="t" style="left:612px;top:832.74px;font-size:16px;letter-spacing:-1.60px;color:#000;">Record3D</div>
<div style="position:absolute;left:596px;top:858px;width:97px;height:32px;background:#ECE9D8;box-shadow: inset -1px -1px 0 #716F64, inset 1px 1px 0 #FFFFFF, inset -2px -2px 0 #D6D2C2, inset 2px 2px 0 #F1EFE2;"></div>
<div class="t" style="left:617px;top:867.74px;font-size:16px;letter-spacing:-1.60px;color:#000;">Preview</div>
</body></html>
